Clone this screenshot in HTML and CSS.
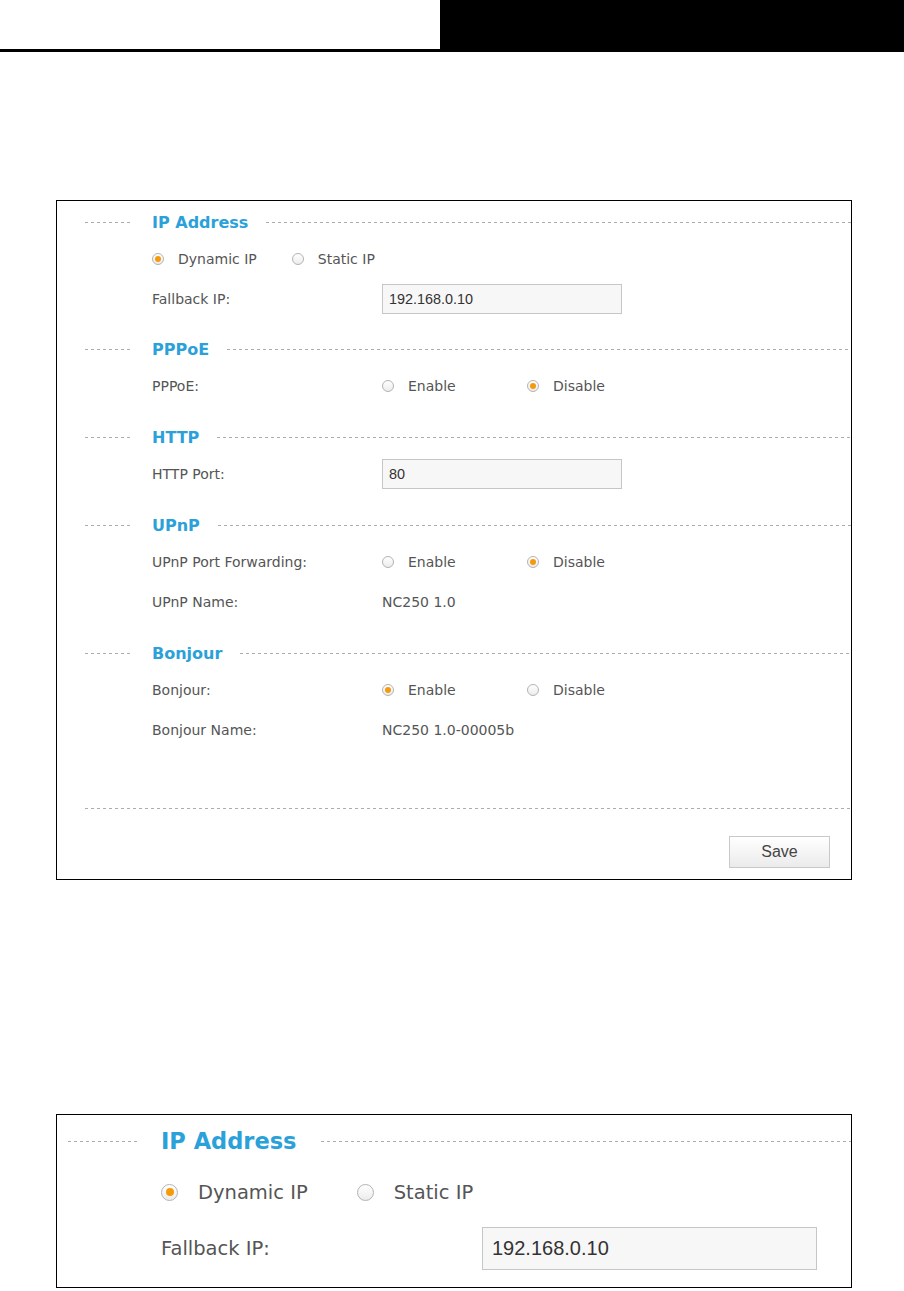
FILE: index.html
```html
<!DOCTYPE html>
<html lang="en">

<head>
    <meta charset="UTF-8">
    <meta name="viewport" content="width=device-width, initial-scale=1.0">
    <title>Advanced Network Settings</title>
    <link rel="stylesheet" href="styles.css">
</head>

<body>
    <div class="doc-header">
        <div class="doc-header-left"></div>
        <div class="doc-header-right"></div>
    </div>

    <div class="panel">
        <div class="section">
            <div class="section-title">
                <span class="dash dash-left"></span>
                <h3>IP Address</h3>
                <span class="dash dash-fill"></span>
            </div>
            <div class="row">
                <label class="radio radio-inline"><span class="radio-dot checked"></span>Dynamic IP</label>
                <label class="radio radio-inline"><span class="radio-dot"></span>Static IP</label>
            </div>
            <div class="row">
                <span class="row-label">Fallback IP:</span>
                <input type="text" class="text-input" value="192.168.0.10">
            </div>
        </div>

        <div class="section">
            <div class="section-title">
                <span class="dash dash-left"></span>
                <h3>PPPoE</h3>
                <span class="dash dash-fill"></span>
            </div>
            <div class="row">
                <span class="row-label">PPPoE:</span>
                <label class="radio"><span class="radio-dot"></span>Enable</label>
                <label class="radio"><span class="radio-dot checked"></span>Disable</label>
            </div>
        </div>

        <div class="section">
            <div class="section-title">
                <span class="dash dash-left"></span>
                <h3>HTTP</h3>
                <span class="dash dash-fill"></span>
            </div>
            <div class="row">
                <span class="row-label">HTTP Port:</span>
                <input type="text" class="text-input" value="80">
            </div>
        </div>

        <div class="section">
            <div class="section-title">
                <span class="dash dash-left"></span>
                <h3>UPnP</h3>
                <span class="dash dash-fill"></span>
            </div>
            <div class="row">
                <span class="row-label">UPnP Port Forwarding:</span>
                <label class="radio"><span class="radio-dot"></span>Enable</label>
                <label class="radio"><span class="radio-dot checked"></span>Disable</label>
            </div>
            <div class="row">
                <span class="row-label">UPnP Name:</span>
                <span class="row-value">NC250 1.0</span>
            </div>
        </div>

        <div class="section">
            <div class="section-title">
                <span class="dash dash-left"></span>
                <h3>Bonjour</h3>
                <span class="dash dash-fill"></span>
            </div>
            <div class="row">
                <span class="row-label">Bonjour:</span>
                <label class="radio"><span class="radio-dot checked"></span>Enable</label>
                <label class="radio"><span class="radio-dot"></span>Disable</label>
            </div>
            <div class="row">
                <span class="row-label">Bonjour Name:</span>
                <span class="row-value">NC250 1.0-00005b</span>
            </div>
        </div>

        <div class="dash dash-bottom"></div>
        <div class="btn-container">
            <button class="save-btn">Save</button>
        </div>
    </div>

    <div class="panel panel-large">
        <div class="section">
            <div class="section-title">
                <span class="dash dash-left"></span>
                <h3>IP Address</h3>
                <span class="dash dash-fill"></span>
            </div>
            <div class="row">
                <label class="radio radio-inline"><span class="radio-dot checked"></span>Dynamic IP</label>
                <label class="radio radio-inline"><span class="radio-dot"></span>Static IP</label>
            </div>
            <div class="row">
                <span class="row-label">Fallback IP:</span>
                <input type="text" class="text-input" value="192.168.0.10">
            </div>
        </div>
    </div>
</body>

</html>
```

FILE: styles.css
```css
body {
    margin: 0;
    padding: 0;
    background-color: #fff;
    font-family: "DejaVu Sans", Verdana, sans-serif;
    color: #555;
}

/* manual page header */
.doc-header {
    display: flex;
    height: 52px;
}

.doc-header-left {
    width: 440px;
    border-bottom: 3px solid #000;
    box-sizing: border-box;
}

.doc-header-right {
    flex: 1;
    background-color: #000;
}

/* screenshot panel */
.panel {
    margin: 148px 52px 0 56px;
    border: 1px solid #000;
    padding: 11px 0 11px 0;
}

.section + .section {
    margin-top: 20px;
}

.section:nth-child(n+3) {
    padding-top: 1px;
}

.dash {
    display: block;
    height: 1px;
    background: repeating-linear-gradient(to right, #acacac 0 3px, transparent 3px 6px);
}

.section-title {
    display: flex;
    align-items: center;
    height: 20px;
    margin-bottom: 7px;
    padding-left: 28px;
}

.dash-left {
    width: 46px;
}

.dash-fill {
    flex: 1;
}

.section-title h3 {
    margin: 0 18px 0 21px;
    font-size: 16px;
    font-weight: bold;
    color: #2ba1da;
}

.row {
    display: flex;
    align-items: center;
    height: 40px;
    padding-left: 95px;
    font-size: 14px;
}

.row-label {
    width: 230px;
    flex-shrink: 0;
}

.radio {
    display: flex;
    align-items: center;
    width: 145px;
}

.radio-inline {
    width: auto;
    margin-right: 35px;
}

.radio-dot {
    display: inline-flex;
    align-items: center;
    justify-content: center;
    width: 12px;
    height: 12px;
    margin-right: 14px;
    box-sizing: border-box;
    border: 1px solid #b3b3b3;
    border-radius: 50%;
    background: linear-gradient(#fff, #ececec);
}

.radio-dot.checked::after {
    content: "";
    width: 6px;
    height: 6px;
    border-radius: 50%;
    background-color: #f59a0c;
}

.text-input {
    width: 240px;
    height: 30px;
    box-sizing: border-box;
    padding: 0 6px;
    border: 1px solid #c6c6c6;
    background-color: #f7f7f7;
    font-family: "Liberation Sans", Arial, sans-serif;
    font-size: 14.4px;
    color: #333;
}

.dash-bottom {
    margin: 58px 0 0 28px;
}

.btn-container {
    display: flex;
    justify-content: flex-end;
    margin-top: 27px;
    padding-right: 21px;
}

.save-btn {
    width: 101px;
    height: 32px;
    border: 1px solid #c9c9c9;
    background: linear-gradient(#fff, #ebebeb);
    font-family: "Liberation Sans", Arial, sans-serif;
    font-size: 16px;
    color: #444;
    cursor: pointer;
}

/* zoomed copy of the IP Address block */
.panel-large {
    margin-top: 234px;
    padding: 12px 0 11px 0;
}

.panel-large .section-title {
    height: 28px;
    margin-bottom: 9px;
    padding-left: 11px;
}

.panel-large .dash-left {
    width: 69px;
}

.panel-large .section-title h3 {
    margin: 0 25px 0 24px;
    font-size: 22.5px;
}

.panel-large .row {
    height: 56px;
    padding-left: 104px;
    font-size: 19.5px;
}

.panel-large .row-label {
    width: 321px;
}

.panel-large .radio-inline {
    margin-right: 49px;
}

.panel-large .radio-dot {
    width: 17px;
    height: 17px;
    margin-right: 20px;
}

.panel-large .radio-dot.checked::after {
    width: 8px;
    height: 8px;
}

.panel-large .text-input {
    width: 335px;
    height: 43px;
    padding: 0 9px;
    font-size: 20px;
}
```
